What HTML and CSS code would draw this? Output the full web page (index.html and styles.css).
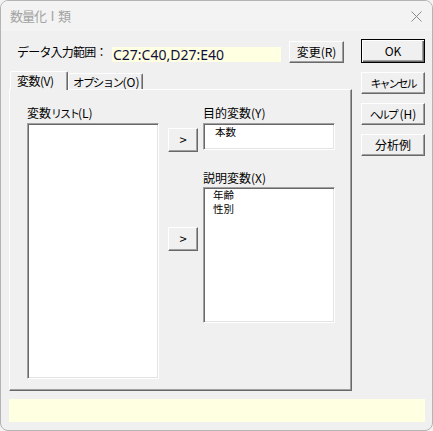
FILE: index.html
```html
<!DOCTYPE html>
<html lang="ja">
<head>
<meta charset="utf-8">
<title>数量化Ⅰ類</title>
<link rel="stylesheet" href="styles.css">
</head>
<body>
<div class="window">
  <div class="titlebar">
    <span class="title">数量化Ⅰ類</span>
    <svg class="close" width="11" height="11" viewBox="0 0 11 11"><path d="M0.5 0.5 L10.5 10.5 M10.5 0.5 L0.5 10.5" stroke="#8a8a8a" stroke-width="1" fill="none"/></svg>
  </div>
  <div class="content">
    <div class="main">
      <div class="range-row">
        <span class="range-label">データ入力範囲：</span>
        <span class="range-field">C27:C40,D27:E40</span>
        <button class="btn change">変更(R)</button>
      </div>
      <div class="tabs">
        <div class="tab active">変数(V)</div>
        <div class="tab"><span class="kana">オプション</span>(O)</div>
      </div>
      <div class="panel">
        <div class="col col-list">
          <div class="lbl">変数<span class="kana-n">リスト</span>(L)</div>
          <div class="listbox big"></div>
        </div>
        <div class="col col-arrows">
          <button class="btn arrow first">&gt;</button>
          <button class="btn arrow second">&gt;</button>
        </div>
        <div class="col col-target">
          <div class="lbl">目的変数(Y)</div>
          <div class="listbox small"><div class="item">本数</div></div>
          <div class="lbl lbl2">説明変数(X)</div>
          <div class="listbox mid tight"><div class="item">年齢</div><div class="item">性別</div></div>
        </div>
      </div>
    </div>
    <div class="side">
      <button class="btn side-btn ok">OK</button>
      <button class="btn side-btn"><span class="kana-n">キャンセル</span></button>
      <button class="btn side-btn"><span class="kana-n">ヘルプ</span> (H)</button>
      <button class="btn side-btn">分析例</button>
    </div>
  </div>
  <div class="status"></div>
</div>
</body>
</html>
```
FILE: styles.css
```css
* { box-sizing: border-box; }
html, body { margin: 0; padding: 0; background: #f3f3f3; }
body {
  font-family: "Noto Sans CJK JP", "Noto Sans", sans-serif;
  font-size: 12px;
  color: #000;
}
.window {
  width: 433px;
  height: 431px;
  border: 1px solid #b4b4b4;
  border-radius: 8px;
  background: #f0f0f0;
  overflow: hidden;
  display: flex;
  flex-direction: column;
}
.titlebar {
  height: 30px;
  background: #f3f3f3;
  display: flex;
  align-items: center;
  justify-content: space-between;
  padding: 0 10px 0 9px;
  flex: none;
}
.title {
  font-size: 13px;
  color: #a2a2a2;
  line-height: 16px;
  letter-spacing: -1px;
}
.close { display: block; }
.content {
  display: flex;
  padding: 8px 0 0 8px;
  gap: 9px;
}
.main {
  width: 343px;
  display: flex;
  flex-direction: column;
}
.range-row {
  height: 22px;
  margin-top: 2px;
  display: flex;
  align-items: center;
}
.range-label {
  width: 103px;
  padding-left: 8px;
  line-height: 16px;
  letter-spacing: -0.8px;
  white-space: nowrap;
}
.range-field {
  width: 169px;
  height: 15px;
  margin-top: 5px;
  background: #ffffe1;
  font-family: "Noto Sans", sans-serif;
  font-size: 14px;
  line-height: 15px;
  color: #10103a;
  padding-left: 1px;
  white-space: nowrap;
}
.btn {
  font-family: inherit;
  font-size: 12px;
  color: #000;
  background: #f0f0f0;
  border: 1px solid;
  border-color: #fff #696969 #696969 #fff;
  box-shadow: inset -1px -1px #a0a0a0;
  padding: 0;
  margin: 0;
  line-height: 16px;
  white-space: nowrap;
}
.change {
  width: 55px;
  height: 22px;
  margin-left: 8px;
}
.tabs {
  display: flex;
  align-items: flex-end;
  margin-top: 8px;
  height: 19px;
  margin-bottom: -1px;
  position: relative;
  z-index: 1;
}
.tab {
  height: 16px;
  margin-bottom: 1px;
  background: #f0f0f0;
  border-top: 1px solid #fff;
  border-left: 1px solid #fff;
  border-right: 1px solid #696969;
  box-shadow: inset -1px 0 #a0a0a0;
  border-radius: 2px 2px 0 0;
  padding: 1px 0 0 4px;
  line-height: 14px;
  width: 75px;
  white-space: nowrap;
}
.tab .kana { font-size: 11.5px; letter-spacing: -1.6px; }
.tab.active {
  height: 19px;
  margin-bottom: 0;
  width: 58px;
  margin-left: 1px;
  padding: 1px 0 0 6px;
  line-height: 15px;
  letter-spacing: -0.5px;
}
.panel {
  height: 302px;
  border: 1px solid;
  border-color: #fff #696969 #696969 #fff;
  box-shadow: inset -1px -1px #a0a0a0;
  display: flex;
  padding: 15px 0 0 17px;
}
.col { display: flex; flex-direction: column; }
.lbl {
  line-height: 16px;
  height: 16px;
  margin-bottom: 2px;
  white-space: nowrap;
}
.kana-n { font-size: 11px; letter-spacing: -2px; }
.listbox {
  background: #fff;
  border: 1px solid;
  border-color: #a0a0a0 #fff #fff #a0a0a0;
  box-shadow: inset 1px 1px #696969, inset -1px -1px #e3e3e3;
  width: 132px;
  padding: 1px 0 0 11px;
}
.listbox.big { height: 256px; }
.listbox.small { height: 27px; }
.listbox.mid { height: 136px; }
.listbox.tight { padding-top: 0; padding-left: 9px; }
.item { line-height: 14px; height: 14px; font-size: 10.5px; }
.col-arrows { margin-left: 9px; }
.arrow {
  width: 30px;
  height: 24px;
  font-size: 13px;
  line-height: 18px;
}
.arrow.first { margin-top: 23px; }
.arrow.second { margin-top: 75px; }
.col-target { margin-left: 5px; }
.lbl2 { margin-top: 20px; margin-bottom: 1px; }
.side {
  width: 64px;
  display: flex;
  flex-direction: column;
  gap: 9px;
}
.side-btn { height: 22px; width: 64px; }
.side-btn.ok {
  height: 24px;
  border: 1px solid #000;
  box-shadow: inset 1px 1px #fff, inset -1px -1px #696969, inset -2px -2px #a0a0a0;
}
.status {
  margin: 8px 0 0 8px;
  width: 416px;
  height: 23px;
  background: #ffffe1;
}
```
